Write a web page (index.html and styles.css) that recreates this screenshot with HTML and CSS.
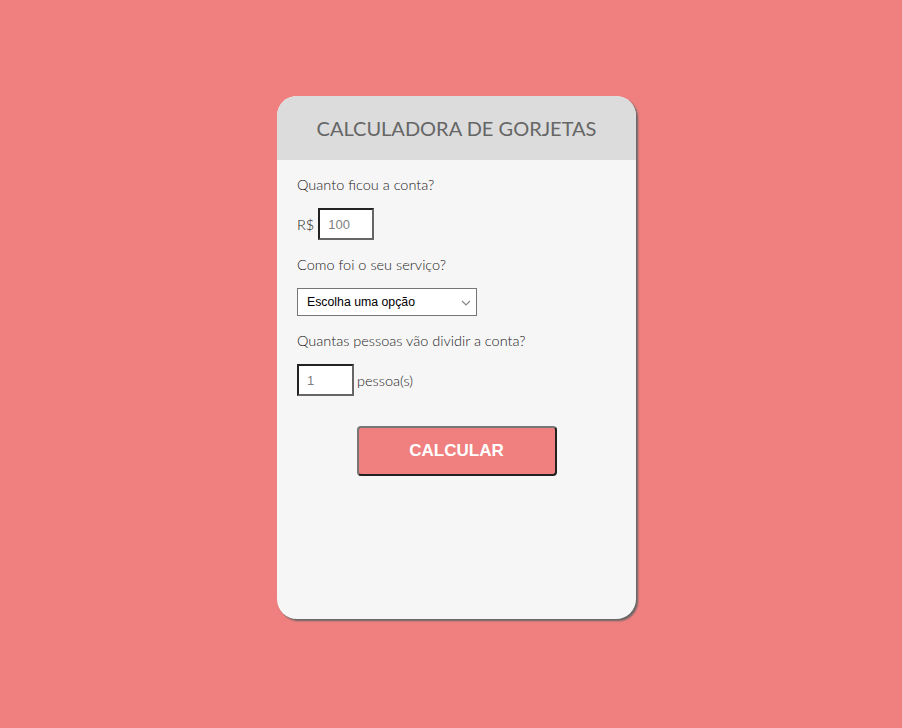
FILE: index.html
```html
<!DOCTYPE html>
<html lang="pt-BR">
<head>
<meta charset="utf-8">
<title>Calculadora de Gorjetas</title>
<link rel="stylesheet" href="styles.css">
</head>
<body>
<main class="card">
  <header class="card-header">
    <h1>CALCULADORA DE GORJETAS</h1>
  </header>
  <section class="card-body">
    <p class="label">Quanto ficou a conta?</p>
    <div class="row">
      <span class="prefix">R$</span>
      <input class="field field-bill" type="text" placeholder="100">
    </div>
    <p class="label">Como foi o seu serviço?</p>
    <div class="row">
      <div class="select-wrap">
        <select class="select">
          <option>Escolha uma opção</option>
          <option>30% - Muito bom</option>
          <option>20% - Bom</option>
          <option>10% - Razoável</option>
        </select>
        <svg class="chevron" width="10" height="6" viewBox="0 0 10 6" aria-hidden="true"><path d="M1 1l4 4 4-4" fill="none" stroke="#888" stroke-width="1.2"/></svg>
      </div>
    </div>
    <p class="label">Quantas pessoas vão dividir a conta?</p>
    <div class="row">
      <input class="field field-people" type="text" placeholder="1">
      <span class="suffix">pessoa(s)</span>
    </div>
    <div class="actions">
      <button class="btn" type="button">CALCULAR</button>
    </div>
  </section>
</main>
</body>
</html>
```

FILE: styles.css
```css
* { box-sizing: border-box; }
html, body { margin: 0; padding: 0; }
body {
  background: #f08080;
  font-family: Lato, "Open Sans", sans-serif;
  min-height: 728px;
  display: flex;
  justify-content: center;
  padding-top: 96px;
}
.card {
  width: 359px;
  height: 523px;
  margin-left: 11px;
  background: #f6f6f6;
  border-radius: 20px;
  box-shadow: 2px 2px 2px #666;
  overflow: hidden;
}
.card-header {
  height: 64px;
  background: #dcdcdc;
  display: flex;
  align-items: center;
  justify-content: center;
}
.card-header h1 {
  margin: 0;
  font-weight: 400;
  font-size: 20px;
  color: #666;
}
.card-body {
  padding: 16px 20px;
}
.label {
  margin: 0 0 14px;
  font-weight: 300;
  font-size: 14.5px;
  color: #222;
  line-height: 18px;
}
.row {
  display: flex;
  align-items: center;
  margin-bottom: 16px;
}
.prefix, .suffix {
  font-weight: 300;
  font-size: 14.5px;
  color: #222;
}
.prefix { margin-right: 4px; }
.suffix { margin-left: 3px; }
.field {
  height: 32px;
  border: 2px solid;
  border-color: #222 #666 #666 #222;
  background: #fff;
  font-family: Arial, "Liberation Sans", sans-serif;
  font-size: 13px;
  padding: 0 8px;
  outline: none;
}
.field::placeholder { color: #808080; }
.field-bill { width: 56px; }
.field-people { width: 57px; }
.select-wrap {
  position: relative;
  width: 180px;
  height: 28px;
}
.select {
  appearance: none;
  -webkit-appearance: none;
  width: 100%;
  height: 100%;
  border: 1px solid #767676;
  background: #fff;
  font-family: Arial, "Liberation Sans", sans-serif;
  font-size: 12.3px;
  color: #000;
  padding: 0 20px 0 9px;
  border-radius: 0;
}
.chevron {
  position: absolute;
  right: 6px;
  top: 12px;
  pointer-events: none;
}
.actions {
  display: flex;
  justify-content: center;
  margin-top: 30px;
}
.btn {
  width: 200px;
  height: 50px;
  background: #f08080;
  border: 2px solid;
  border-color: #777 #222 #222 #777;
  border-radius: 4px;
  color: #fff;
  font-family: Arial, "Liberation Sans", sans-serif;
  font-weight: 700;
  font-size: 17px;
}
```
